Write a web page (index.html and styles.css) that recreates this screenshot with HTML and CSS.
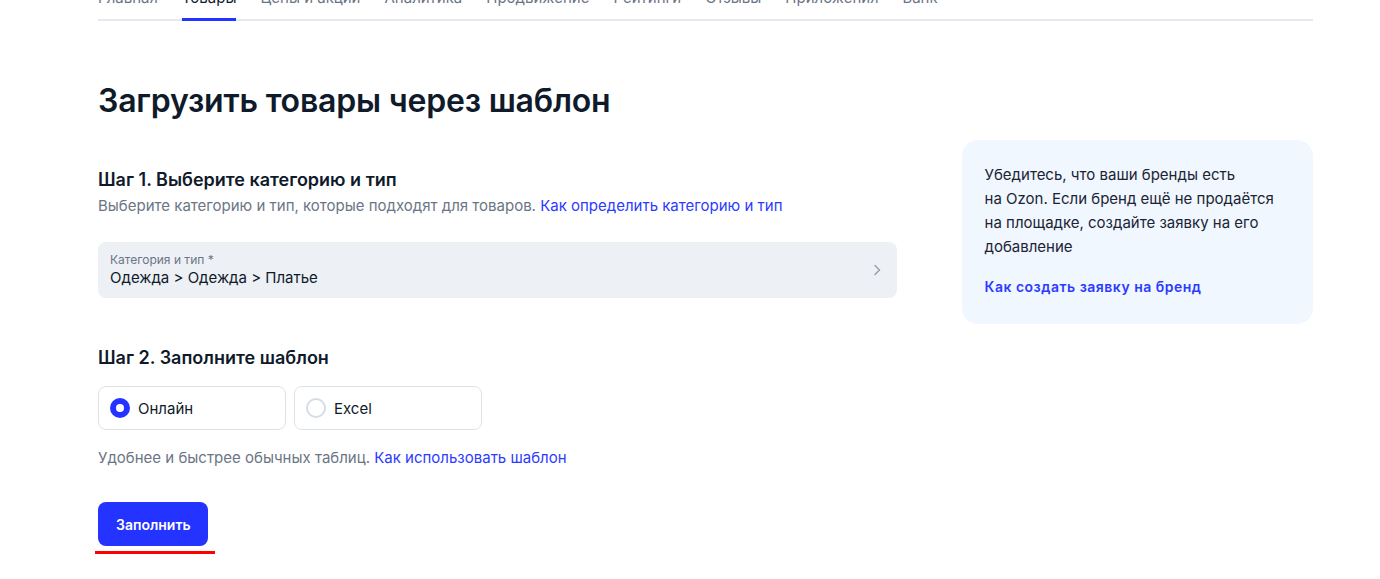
FILE: index.html
```html
<!DOCTYPE html>
<html lang="ru">
<head>
<meta charset="utf-8">
<link rel="stylesheet" href="styles.css">
</head>
<body>
<div class="page">
  <nav class="tabs">
    <a class="tab">Главная</a>
    <a class="tab active">Товары</a>
    <a class="tab">Цены и акции</a>
    <a class="tab">Аналитика</a>
    <a class="tab">Продвижение</a>
    <a class="tab">Рейтинги</a>
    <a class="tab">Отзывы</a>
    <a class="tab">Приложения</a>
    <a class="tab">Банк</a>
  </nav>
  <h1 class="title">Загрузить товары через шаблон</h1>
  <div class="layout">
    <main class="main">
      <section class="step">
        <h2 class="step-title">Шаг 1. Выберите категорию и тип</h2>
        <p class="hint">Выберите категорию и тип, которые подходят для товаров. <a class="link">Как определить категорию и тип</a></p>
        <div class="select">
          <div class="select-text">
            <div class="select-label">Категория и тип *</div>
            <div class="select-value">Одежда &gt; Одежда &gt; Платье</div>
          </div>
          <svg class="chev" width="16" height="16" viewBox="0 0 16 16"><path d="M6 3.5 10.5 8 6 12.5" fill="none" stroke="#9aa3b0" stroke-width="1.6" stroke-linecap="round" stroke-linejoin="round"/></svg>
        </div>
      </section>
      <section class="step step2">
        <h2 class="step-title">Шаг 2. Заполните шаблон</h2>
        <div class="radios">
          <label class="radio-card"><span class="radio checked"></span><span>Онлайн</span></label>
          <label class="radio-card"><span class="radio"></span><span>Excel</span></label>
        </div>
        <p class="hint hint2">Удобнее и быстрее обычных таблиц. <a class="link">Как использовать шаблон</a></p>
        <div class="btn-wrap">
          <button class="btn">Заполнить</button>
          <div class="mark"></div>
        </div>
      </section>
    </main>
    <aside class="card">
      <p class="card-text">Убедитесь, что ваши бренды есть<br>на Ozon. Если бренд ещё не продаётся<br>на площадке, создайте заявку на его<br>добавление</p>
      <a class="card-link">Как создать заявку на бренд</a>
    </aside>
  </div>
</div>
</body>
</html>
```

FILE: styles.css
```css
* { box-sizing: border-box; }
html, body { margin: 0; background: #fff; }
body {
  font-family: Inter, "Noto Sans", sans-serif;
  color: #0f1a2b;
  overflow: hidden;
}
.page {
  width: 1215px;
  margin-left: 98px;
  margin-top: -12px;
}
.tabs {
  display: flex;
  gap: 24px;
  border-bottom: 2px solid #e6e9ef;
}
.tab {
  font-size: 15px;
  line-height: 20px;
  color: #6b7585;
  padding: 0 0 10px;
  margin-bottom: -2px;
  border-bottom: 3px solid transparent;
}
.tab.active { color: #0f1a2b; border-bottom-color: #2433ff; }
.title {
  margin: 60px 0 0;
  font-size: 32px;
  line-height: 40px;
  font-weight: 600;
  letter-spacing: -0.2px;
}
.layout {
  display: flex;
  gap: 65px;
  align-items: flex-start;
  margin-top: 19px;
}
.main { width: 800px; padding-top: 28px; }
.step-title {
  margin: 0;
  font-size: 18px;
  line-height: 24px;
  font-weight: 600;
}
.hint {
  margin: 4px 0 0;
  font-size: 15px;
  line-height: 20px;
  color: #6b7585;
}
.link { color: #2c3bff; }
.select {
  margin-top: 26px;
  height: 56px;
  background: #edf0f4;
  border-radius: 8px;
  display: flex;
  align-items: center;
  justify-content: space-between;
  padding: 0 12px;
}
.select-label { font-size: 12px; line-height: 16px; color: #6b7585; }
.select-value { font-size: 15px; line-height: 20px; color: #0f1a2b; }
.step2 { margin-top: 48px; }
.radios { display: flex; gap: 8px; margin-top: 16px; }
.radio-card {
  width: 188px;
  height: 44px;
  border: 1px solid #dde2e9;
  border-radius: 8px;
  display: flex;
  align-items: center;
  gap: 8px;
  padding: 0 11px;
  font-size: 15px;
  color: #0f1a2b;
}
.radio {
  width: 20px; height: 20px;
  border-radius: 50%;
  border: 2px solid #d5dde8;
}
.radio.checked { border: 6px solid #2433ff; background: #fff; }
.hint2 { margin-top: 18px; }
.btn-wrap { margin-top: 34px; display: inline-flex; flex-direction: column; align-items: flex-start; }
.btn {
  height: 44px;
  padding: 0 17px 0 18px;
  background: #2433ff;
  color: #fff;
  border: 0;
  border-radius: 8px;
  font-family: inherit;
  font-size: 14px;
  font-weight: 600;
}
.mark { margin: 5px 0 0 -3px; width: 120px; height: 3px; background: #ff0000; }
.card {
  width: 352px;
  background: #f0f7ff;
  border-radius: 16px;
  padding: 23px 23px 25px;
}
.card-text { margin: 0; font-size: 15px; line-height: 24px; color: #1b2434; }
.card-link { display: block; margin-top: 16px; font-size: 14px; line-height: 24px; font-weight: 600; letter-spacing: 0.5px; color: #2c3bff; }
```
